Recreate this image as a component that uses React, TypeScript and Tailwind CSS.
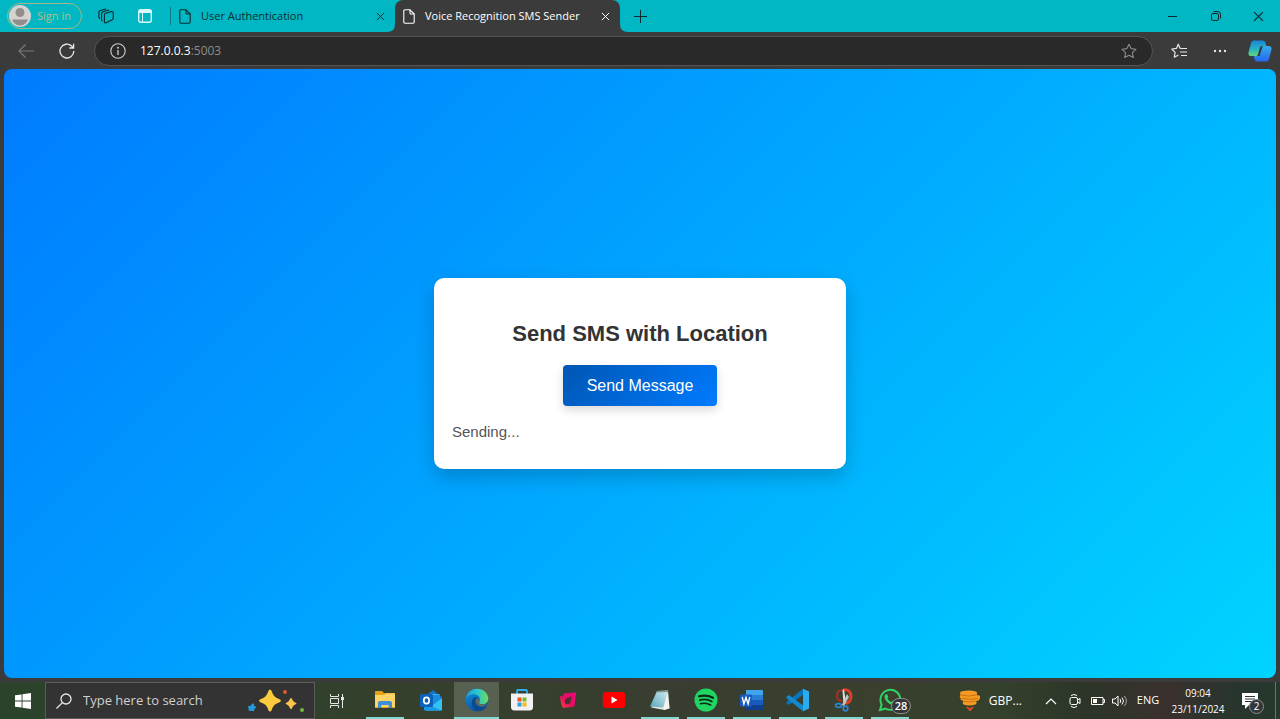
import type { ReactNode } from "react";

const UI = "font-['Open_Sans','Noto_Sans',sans-serif]";

function FileIcon() {
  return (
    <svg viewBox="0 0 12 15" className="h-[15px] w-3 shrink-0" fill="none" stroke="currentColor" strokeWidth="1.1" strokeLinejoin="round">
      <path d="M2 .8h5L11.2 5v8q0 1.2-1.2 1.200H2Q.8 14.200.8 13V2Q.8.8 2 .8Z" />
      <path d="M7 .8V4q0 1 1 1h3.200" />
    </svg>
  );
}

function CloseIcon({ className }: { className: string }) {
  return (
    <svg viewBox="0 0 10 10" className={className} fill="none" stroke="currentColor" strokeWidth="1.1">
      <path d="M1 1l8 8M9 1L1 9" />
    </svg>
  );
}

function TabStrip() {
  return (
    <header className="flex h-8 items-stretch bg-[#00b7c3] text-[#10292c]">
      <div className="flex w-[170px] items-center">
        <button className="ml-[7px] flex h-[26px] w-[75px] items-center gap-[6px] rounded-full border border-[#a5b886] pl-px text-[11px] leading-4 text-[#b5bd86]">
          <svg viewBox="0 0 22 22" className="h-[22px] w-[22px] shrink-0">
            <circle cx="11" cy="11" r="11" fill="#d5d3d1" />
            <circle cx="11" cy="7.500" r="4.500" fill="#918d8b" />
            <path d="M3.500 14.500h15v1q-2.500 5-7.500 5t-7.500-5Z" fill="#918d8b" />
          </svg>
          <span className="whitespace-nowrap">Sign in</span>
        </button>
        <button aria-label="Workspaces" className="ml-4">
          <svg viewBox="0 0 16 16" className="h-4 w-4" fill="none" stroke="currentColor" strokeWidth="1.100" strokeLinejoin="round" strokeLinecap="round">
            <path d="M7.200 5.600l6.300-2q1.500-.3 1.700 1v5.600q0 1-1 1.500l-6 3q-1.700.8-1.800-1V7q0-1.100.8-1.400Z" />
            <path d="M4.200 12.800l-.6-.8V5.600q0-1.100 1-1.500l6.200-2" />
            <path d="M1.800 10.800L.9 9.500V4.300q0-1 1-1.500L7.800 1" />
          </svg>
        </button>
        <button aria-label="Vertical tabs" className="ml-6">
          <svg viewBox="0 0 14 14" className="h-[14px] w-[14px]">
            <rect x=".7" y=".7" width="12.600" height="12.600" rx="2" fill="none" stroke="#dafaff" strokeWidth="1.400" />
            <path d="M1 1h12v3H1z" fill="#dafaff" />
            <path d="M4.500 4v9" stroke="#dafaff" />
          </svg>
        </button>
      </div>
      <div className="my-[7px] w-px bg-[#087f88]" />
      <div className="flex w-56 items-center rounded-br-lg pr-[10px] pl-2 text-[11px] text-[#0b2e31]">
        <FileIcon />
        <a href="#auth" className="ml-[10px] grow whitespace-nowrap">User Authentication</a>
        <button aria-label="Close User Authentication"><CloseIcon className="h-[9px] w-[9px]" /></button>
      </div>
      <div className="relative flex w-[225px] items-center rounded-t-lg bg-[#3b3b3b] pr-[10px] pl-2 text-[11px] text-white">
        <svg viewBox="0 0 8 8" className="absolute bottom-0 -left-2 h-2 w-2"><path d="M8 0v8H0Q8 8 8 0Z" fill="#3b3b3b" /></svg>
        <svg viewBox="0 0 8 8" className="absolute -right-2 bottom-0 h-2 w-2"><path d="M0 0v8h8Q0 8 0 0Z" fill="#3b3b3b" /></svg>
        <FileIcon />
        <a href="#sender" className="ml-[10px] grow whitespace-nowrap">Voice Recognition SMS Sender</a>
        <button aria-label="Close Voice Recognition SMS Sender"><CloseIcon className="h-[9px] w-[9px]" /></button>
      </div>
      <button aria-label="New tab" className="ml-[13px]">
        <svg viewBox="0 0 14 14" className="h-[14px] w-[14px]" stroke="currentColor"><path d="M7.500 1v13M1 7.500h13" /></svg>
      </button>
      <div className="ml-auto flex">
        <button aria-label="Minimize" className="flex w-[43px] items-center justify-center">
          <svg viewBox="0 0 10 10" className="h-[10px] w-[10px]" stroke="currentColor"><path d="M0 5.500h9" /></svg>
        </button>
        <button aria-label="Restore" className="flex w-[43px] items-center justify-center">
          <svg viewBox="0 0 10 10" className="h-[10px] w-[10px]" fill="none" stroke="currentColor">
            <rect x=".5" y="2.500" width="7" height="7" rx="1.500" /><path d="M2.500.6H7q2.500 0 2.500 2.500V7.500" />
          </svg>
        </button>
        <button aria-label="Close window" className="flex w-[43px] items-center justify-center"><CloseIcon className="h-[11px] w-[11px]" /></button>
      </div>
    </header>
  );
}

const STAR = "M8 1.200l2.100 4.400 4.800.7-3.500 3.400.9 4.900L8 12.300l-4.300 2.300.9-4.900L1.100 6.300l4.800-.7Z";

function Toolbar() {
  return (
    <div className="flex h-[37px] items-center bg-[#3b3b3b] text-[#e8e8e8]">
      <button aria-label="Back" className="ml-[18px] text-[#7a7a7a]">
        <svg viewBox="0 0 16 16" className="h-4 w-4" fill="none" stroke="currentColor" strokeWidth="1.200"><path d="M16 8H1M7.500 1.500L1 8l6.500 6.500" /></svg>
      </button>
      <button aria-label="Refresh" className="ml-[25px]">
        <svg viewBox="0 0 16 16" className="h-4 w-4" fill="none" stroke="currentColor" strokeWidth="1.300"><path d="M14.800 8A6.900 6.900 0 1 1 12.600 3L14.500 5M14.600.8V5h-4.300" /></svg>
      </button>
      <div className="ml-[19px] flex h-[30px] grow items-center rounded-full border border-[#555452] bg-[#292929] px-[15px]">
        <svg viewBox="0 0 16 16" className="h-4 w-4 shrink-0" fill="none" stroke="#cfcfcf" strokeWidth="1.100">
          <circle cx="8" cy="8" r="7.200" /><path d="M8 7v5" strokeWidth="1.300" /><circle cx="8" cy="4.700" r=".4" fill="#cfcfcf" />
        </svg>
        <div className="ml-[14px] grow text-xs text-[#8d8d8d]"><span className="text-white">127.0.0.3</span>:5003</div>
        <button aria-label="Add to favorites" className="text-[#8b8b8b]">
          <svg viewBox="0 0 16 16" className="h-4 w-4" fill="none" stroke="currentColor" strokeWidth="1.100" strokeLinejoin="round"><path d={STAR} /></svg>
        </button>
      </div>
      <button aria-label="Favorites" className="ml-[18px]">
        <svg viewBox="0 0 16 16" className="h-4 w-4" fill="none" stroke="currentColor" strokeWidth="1.200" strokeLinejoin="round" strokeLinecap="round">
          <path d="M10.500 5.500L9 5.200 7.300 1.200 5.400 5.400.8 6l3.300 3.300-.8 4.900L7 12.200M10 5.500h5.500M9.500 9h6M10.500 12.500h5" />
        </svg>
      </button>
      <button aria-label="Settings and more" className="ml-[26px]">
        <svg viewBox="0 0 14 4" className="h-1 w-[14px]" fill="currentColor"><circle cx="2" cy="2" r="1.200" /><circle cx="7" cy="2" r="1.200" /><circle cx="12" cy="2" r="1.200" /></svg>
      </button>
      <button aria-label="Copilot" className="mr-2 ml-[21px]">
        <svg viewBox="0 0 24 22" className="h-[22px] w-6">
          <defs>
            <linearGradient id="cpa" x1="0" y1="0" x2="0" y2="1"><stop stopColor="#1b85d8" /><stop offset=".55" stopColor="#25b3c4" /><stop offset="1" stopColor="#66d47b" /></linearGradient>
            <linearGradient id="cpb" x1="0" y1="0" x2="0" y2="1"><stop stopColor="#35aee9" /><stop offset="1" stopColor="#2467ef" /></linearGradient>
          </defs>
          <path d="M5.500.5h9q2.500 0 3.200 3l.7 2.700h-3.500q-1.900 0-2.600 2L10 16H3.500Q-.3 16 .6 12L3 3Q3.600.5 5.500.5Z" fill="url(#cpa)" />
          <path d="M18.500 21.500h-9q-2.500 0-3.200-3L5.800 16H9q2 0 2.800-2L14.200 6h6.300q3.800 0 2.900 4L21 19q-.6 2.500-2.500 2.500Z" fill="url(#cpb)" />
          <path d="M12 7.500L9.800 15q-.5 1-1.500 1h3.300l2.600-8.500q.4-1.300 1.600-1.300h-2.300q-1.100 0-1.500 1.300Z" fill="#303a45" />
        </svg>
      </button>
    </div>
  );
}

function Page() {
  return (
    <main className="mx-1 flex grow items-center justify-center rounded-lg bg-[linear-gradient(135deg,#007bff,#00d4ff)] font-['Liberation_Sans',Arial,sans-serif]">
      <section className="flex w-[412px] flex-col items-center rounded-[10px] bg-white px-[18px] pt-10 pb-[25px] shadow-[0_8px_20px_rgba(0,0,0,0.2)]">
        <h1 className="text-[22px] leading-8 font-bold text-[#333]">Send SMS with Location</h1>
        <button className="mt-[15px] rounded bg-[linear-gradient(135deg,#0056b3,#007bff)] px-6 py-[9px] text-base leading-[23px] text-white shadow-[0_4px_10px_rgba(0,0,0,0.15)]">Send Message</button>
        <p className="mt-[14px] self-start text-[15px] leading-6 text-[#555]">Sending...</p>
      </section>
    </main>
  );
}

function Explorer() {
  return (
    <svg viewBox="0 0 22 20" className="h-5 w-[22px]">
      <path d="M1 2q0-1 1-1h6l2 2h10q1 0 1 1v14H1Z" fill="#e6a21b" />
      <path d="M1 5h9l2-1.500h9V17H1Z" fill="#fbd468" />
      <path d="M4 18v-5q0-2 2-2h10q2 0 2 2v5h-3.500v-3h-7v3Z" fill="#3f8fd6" />
      <path d="M7.500 15h7v2h-7z" fill="#fbd468" />
    </svg>
  );
}

function Outlook() {
  return (
    <svg viewBox="0 0 24 22" className="h-[22px] w-6">
      <path d="M5 8L14 1l9 7v12q0 1.500-1.500 1.500H6.500Q5 21.500 5 20Z" fill="#1473c5" />
      <path d="M8 5h13v11H8z" fill="#45b8ee" />
      <path d="M10 7l11-2v7l-7 4Z" fill="#1b8bdc" />
      <path d="M23 9v11q0 1.500-1.500 1.500H7L23 9Z" fill="#30c4f2" />
      <path d="M5 13l17 8.500H6.500Q5 21.500 5 20Z" fill="#1a98e2" />
      <rect x="1" y="5" width="13" height="13" rx="1.500" fill="#0b62bd" />
      <ellipse cx="7.500" cy="11.500" rx="2.700" ry="3.200" fill="none" stroke="#fff" strokeWidth="1.700" />
    </svg>
  );
}

function Edge() {
  return (
    <svg viewBox="0 0 24 24" className="h-6 w-6">
      <defs>
        <linearGradient id="eda" x1="0" y1=".3" x2="1" y2=".3"><stop stopColor="#1c9fe1" /><stop offset=".55" stopColor="#2fc7c5" /><stop offset="1" stopColor="#70dc55" /></linearGradient>
        <linearGradient id="edb" x1="0" y1="0" x2=".4" y2="1"><stop stopColor="#1397dd" /><stop offset="1" stopColor="#0754a5" /></linearGradient>
      </defs>
      <circle cx="12" cy="12" r="11.300" fill="url(#edb)" />
      <path d="M.9 10.500C2 4.500 6.500.7 12 .7c6.500 0 11.300 4.600 11.300 10 0 3.500-2.700 5.600-5.800 5.600-2.600 0-4-1-3.400-2 2.400-3.900-.5-8-5.200-8C5 6.300 2.200 8.200.9 10.500Z" fill="url(#eda)" />
      <path d="M9 9.500c-4 3.500-2.500 11.600 3.500 13.700 4 .2 7.400-1.600 9.500-5.200-3.800 2-7.900 1.300-10.100-.8C9.600 15 9.500 11.500 12.500 10.300 11.500 9 10 8.800 9 9.500Z" fill="#0b4a91" />
      <path d="M12.100 10.300q-2.900 2.600 0 6.300 1.800 2.200 6.500 2.200l3.200-3.200q-3.800 1.400-7 .2-1.200-.8-.5-1.800.9-2-2.200-3.700Z" fill="#5f6a58" />
    </svg>
  );
}

function Store() {
  return (
    <svg viewBox="0 0 24 24" className="h-6 w-6">
      <path d="M7 6V3q0-1 1-1h8q1 0 1 1v3" fill="none" stroke="#2eafe8" strokeWidth="1.800" />
      <path d="M1 5.500h22V19q0 3.500-3.500 3.500h-15Q1 22.500 1 19Z" fill="#f1f1f1" />
      <path d="M7.500 9.500h4v4h-4z" fill="#f05123" /><path d="M12.500 9.500h4v4h-4z" fill="#7eb82e" />
      <path d="M7.500 14.500h4v4h-4z" fill="#2aa1df" /><path d="M12.500 14.500h4v4h-4z" fill="#f8b914" />
    </svg>
  );
}

function Pink() {
  return (
    <svg viewBox="0 0 18 18" className="h-[18px] w-[18px]">
      <defs><linearGradient id="pk" x1="1" y1="0" x2="0" y2="1"><stop stopColor="#ef0880" /><stop offset=".55" stopColor="#e50d61" /><stop offset="1" stopColor="#f04b34" /></linearGradient></defs>
      <path d="M1 5l2.500.5L5 2.500l12-1-1.500 14L4 17Q1.500 13 1 5Z" fill="url(#pk)" />
      <path d="M12.800 4.500l-1 5.500q-.8 3.500-4 3.300Q5.300 12.500 6 9.500T9.500 6.800q1.500-.2 3.300-2.300Z" fill="#4b2f31" />
    </svg>
  );
}

function YouTube() {
  return <svg viewBox="0 0 24 18" className="h-[18px] w-6"><rect x=".8" y="1" width="22.400" height="16" rx="3" fill="#fe0000" /><path d="M9.500 5.500v7L15.500 9Z" fill="#fff" /></svg>;
}

function Notepad() {
  return (
    <svg viewBox="0 0 22 22" className="h-[22px] w-[22px]">
      <defs><linearGradient id="np" x1="1" y1="0" x2="0" y2="1"><stop stopColor="#d1edf2" /><stop offset="1" stopColor="#5aa6bb" /></linearGradient></defs>
      <path d="M18 3l2.500 16.500-5 1.500L2 18.500Z" fill="#e5e4df" />
      <path d="M8 2l11-.5-4.500 17L1 17.500Z" fill="url(#np)" />
      <path d="M19 1.500L20.500 19l-5.500 2-.5-2.500Z" fill="#f2f2ee" />
      <path d="M8 2l11-.5-.3 1.500L7.400 3.500Z" fill="#87918f" />
    </svg>
  );
}

function Spotify() {
  return (
    <svg viewBox="0 0 24 24" className="h-6 w-6" fill="none" stroke="#102a19" strokeLinecap="round">
      <circle cx="12" cy="12" r="11.500" fill="#1fd662" stroke="none" />
      <path d="M5 8.300q7.500-2.100 14 1.500" strokeWidth="2.200" /><path d="M5.800 12.100q6.500-1.800 12 1.400" strokeWidth="1.800" /><path d="M6.500 15.700q5.500-1.500 10.200 1.300" strokeWidth="1.500" />
    </svg>
  );
}

function Word() {
  return (
    <svg viewBox="0 0 24 22" className="h-[22px] w-6">
      <path d="M6 1h16q1 0 1 1v5H6Z" fill="#41a5ee" /><path d="M6 6h17v5H6z" fill="#2b7cd3" />
      <path d="M6 11h17v5H6z" fill="#185abd" /><path d="M6 16h17v4q0 1-1 1H7q-1 0-1-1Z" fill="#103f91" />
      <rect x="0" y="5.500" width="12" height="12" rx="1" fill="#185abd" />
      <path d="M2.200 8l1.700 7L6 8.500 8.100 15l1.700-7" fill="none" stroke="#fff" strokeWidth="1.400" />
    </svg>
  );
}

function VSCode() {
  return (
    <svg viewBox="0 0 24 24" className="h-6 w-6">
      <path d="M17 .8v6L2.800 17 .5 15.300v-1.200Z" fill="#0875bd" />
      <path d="M17 23.200v-6L2.800 7 .5 8.700v1.200Z" fill="#128ad1" />
      <path d="M17 .8l6 2.700v17l-6 2.700Z" fill="#2bacf0" />
    </svg>
  );
}

function Snip() {
  return (
    <svg viewBox="0 0 20 24" className="h-6 w-5">
      <path d="M9.500 2C14 1 17 4 17 8.500S15 14.500 12 15.500" fill="none" stroke="#db4025" strokeWidth="3" />
      <path d="M10 2.500C4.500 1.500 3 4.500 3 8s2.500 5 5.500 5" fill="none" stroke="#a92f23" strokeWidth="2" />
      <path d="M8.500 2l1.500-1 2 14-2.500 2Z" fill="#dedfdd" /><path d="M13 6l2 3-5 9-2-1Z" fill="#bfc6c8" />
      <g fill="none" stroke="#2d85d2" strokeWidth="1.700"><ellipse cx="4.500" cy="17.500" rx="3" ry="1.800" /><circle cx="11.500" cy="20.500" r="2.300" /></g>
    </svg>
  );
}

function WhatsApp() {
  return (
    <span className="relative">
      <svg viewBox="0 0 24 24" className="h-6 w-6">
        <path d="M2 22l1.600-5.500A10 10 0 1 1 7.500 20.500Z" fill="none" stroke="#2fd366" strokeWidth="2" />
        <path d="M8 6.300q1.300-.4 1.700 1l.7 1.700-1 1.400q1.500 2.700 4 3.700l1.200-1.400 2.500 1.300q.5 2.600-2.600 2.800Q9.700 16.200 7 11 5.700 7.500 8 6.300Z" fill="#2fd366" />
      </svg>
      <span className="absolute top-[10px] left-[13px] flex h-4 w-5 items-center justify-center rounded-full border border-[#8b8d88] bg-[#33363a] text-[11px] leading-none font-semibold text-white">28</span>
    </span>
  );
}

const apps: { name: string; icon: ReactNode; state: "idle" | "open" | "active" }[] = [
  { name: "File Explorer", icon: <Explorer />, state: "open" },
  { name: "Outlook", icon: <Outlook />, state: "idle" },
  { name: "Edge", icon: <Edge />, state: "active" },
  { name: "Store", icon: <Store />, state: "idle" },
  { name: "Media", icon: <Pink />, state: "idle" },
  { name: "YouTube", icon: <YouTube />, state: "idle" },
  { name: "Notepad", icon: <Notepad />, state: "open" },
  { name: "Spotify", icon: <Spotify />, state: "open" },
  { name: "Word", icon: <Word />, state: "open" },
  { name: "VS Code", icon: <VSCode />, state: "open" },
  { name: "Snipping Tool", icon: <Snip />, state: "open" },
  { name: "WhatsApp", icon: <WhatsApp />, state: "open" },
];

const appStyle = {
  idle: "border-transparent w-[38px] mx-1",
  open: "border-[#83d8d1] w-[38px] mx-1",
  active: "border-[#83d8d1] bg-[#586052] w-[45px]",
};

function Taskbar() {
  return (
    <footer className="flex h-[37px] items-stretch bg-[linear-gradient(90deg,#2b432b_0%,#2c432b_20%,#35402c_30%,#383e30_50%,#3a402e_68%,#34412c_78%,#2c3528_85%,#3a302e_91%,#29352d_96%,#26382d_100%)] text-white">
      <button aria-label="Start" className="flex w-[45px] items-center justify-center">
        <svg viewBox="0 0 16 16" className="h-4 w-4" fill="#fff"><path d="M0 2.300l6.600-.9v6.100H0ZM7.500 1.300L16 .1v7.400H7.500ZM0 8.400h6.600v6.200L0 13.700ZM7.500 8.400H16v7.500l-8.500-1.200Z" /></svg>
      </button>
      <label className="flex w-[270px] items-center border border-[#5c5c5c] bg-[#333] pr-[9px] pl-[10px]">
        <svg viewBox="0 0 16 16" className="h-4 w-4 shrink-0" fill="none" stroke="#e8e8e8" strokeWidth="1.300"><circle cx="10" cy="6" r="5" /><path d="M6.400 9.600L.5 15.500" /></svg>
        <input aria-label="Type here to search" placeholder="Type here to search" className="ml-[11px] w-40 min-w-0 grow bg-transparent text-[13px] outline-none placeholder:text-[#cfcfcf]" />
        <svg viewBox="0 0 58 24" className="h-6 w-[58px] shrink-0">
          <path d="M23 .5q1.500 0 2 2.500 1.500 5 6.500 6.700 2.500.8 2.500 2t-2.500 2Q26.500 15.300 25 20q-.5 2.500-2 2.500T21 20q-1.500-4.700-6.500-6.300-2.500-.8-2.500-2t2.500-2Q19.500 8 21 3q.5-2.500 2-2.500Z" fill="#fccb3e" />
          <path d="M44 9q.9 0 1.300 1.500.7 2.200 2.800 3 1.400.5 1.400 1t-1.400 1q-2.100.8-2.800 3Q44.900 20 44 20t-1.300-1.500q-.7-2.200-2.800-3-1.400-.5-1.400-1t1.400-1q2.100-.8 2.800-3Q43.100 9 44 9Z" fill="#fcc54a" />
          <path d="M6 14.500q1-.2 1 1.200 0 1 1.200 1.500 1.500.8.300 1.900-1.200.6-1.200 1.800 0 1.900-1.500 1.300-1-.8-2.300-.3-2 .7-1.900-1 .5-1.200-.3-2.200-1-1.600.7-1.700 1.500.2 2.200-1.100.8-1.400 1.800-1.400Z" fill="#2499dc" />
          <circle cx="38" cy="3" r="1.900" fill="#e55d2b" /><circle cx="55" cy="21" r="2" fill="#76b843" />
        </svg>
      </label>
      <button aria-label="Task view" className="flex w-[47px] items-center justify-center pr-[3px]">
        <svg viewBox="0 0 16 16" className="h-4 w-4" fill="none" stroke="#e8e8e8"><path d="M1.500 1v2.500h8V1M1.500 15v-2.500h8V15M1.500 5.500h8v5h-8ZM13.500 1v3M13.500 7v8" /><path d="M12 4h3v3h-3z" fill="#e8e8e8" stroke="none" /></svg>
      </button>
      <nav aria-label="Applications" className="flex">
        {apps.map((a) => (
          <button key={a.name} aria-label={a.name} className={`flex shrink-0 items-center justify-center border-b-2 ${appStyle[a.state]}`}>{a.icon}</button>
        ))}
      </nav>
      <div className="ml-auto flex items-center text-xs">
        <button className="flex items-center gap-2">
          <svg viewBox="0 0 22 22" className="h-[22px] w-[22px]">
            <path d="M2 1.500q8-2 15 0 2 1.500.5 3.500l3 .5q1.500 3-1 5L17 11q1.500 2-.5 3.500-6 2-12 0-1.500-1.500 0-3.500-3.500-.5-3-3Q0 6.500 1.500 5 .5 2.500 2 1.500Z" fill="#f69a22" />
            <path d="M2 5q8 2 15.500 0M2 8.200q8 2 17 .3M4.500 11.200q6 1.500 12-.2" fill="none" stroke="#cc7310" />
            <path d="M7.500 17l3.500 1.500 3.500-1.500-3.500 4Z" fill="#dc4a22" stroke="#dc4a22" />
          </svg>
          <span>GBP...</span>
        </button>
        <button aria-label="Show hidden icons" className="ml-[23px]"><svg viewBox="0 0 12 12" className="h-3 w-3" fill="none" stroke="#fff" strokeWidth="1.200"><path d="M1 9l5-5 5 5" /></svg></button>
        <button aria-label="Meet now" className="ml-3"><svg viewBox="0 0 12 16" className="h-4 w-3" fill="none" stroke="#fff"><rect x="1" y="4.500" width="7.500" height="7" rx="1.500" /><path d="M8.500 7L11 5.500v5L8.500 9M2 2.500q3-2 6 0M2 13.500q3 2 6 0" /></svg></button>
        <button aria-label="Battery" className="ml-[10px]"><svg viewBox="0 0 14 10" className="h-[10px] w-[14px]" fill="none" stroke="#fff"><path d="M.5 1.500h11.500v7H.5ZM12 3.500h1.500v3H12" /><path d="M2 3h4v4H2z" fill="#fff" stroke="none" /></svg></button>
        <button aria-label="Volume" className="ml-[7px]"><svg viewBox="0 0 16 14" className="h-[14px] w-4" fill="none" stroke="#fff"><path d="M.5 5h2.500l3-3v10l-3-3H.5ZM8 5q1.500 2 0 4M10 3.500q3 3.500 0 7" /><path d="M12.300 2q4.200 5 0 10" stroke="#aaa" /></svg></button>
        <button className="ml-2 w-6 text-[11px]">ENG</button>
        <button className="ml-2 w-[60px] text-center text-[10px] leading-4"><time>09:04<br />23/11/2024</time></button>
        <button aria-label="Notifications" className="relative mr-3 ml-[13px] h-[22px] w-[22px]">
          <svg viewBox="0 0 22 22" className="h-[22px] w-[22px]"><path d="M1 3h16v12h-9l-4 4v-4H1Z" fill="#fff" /><path d="M4 6.500h10M4 9h10M4 11.500h7" stroke="#30362f" /></svg>
          <span className="absolute top-[9px] left-2 flex h-[15px] w-[15px] items-center justify-center rounded-full border border-[#8b8d88] bg-[#33363a] text-[10px] leading-none">2</span>
        </button>
        <span className="mr-1 h-[37px] w-px bg-[#6b756c]" />
      </div>
    </footer>
  );
}

export default function App() {
  return (
    <div className={`flex min-h-screen flex-col bg-[#3b3b3b] ${UI}`}>
      <TabStrip />
      <Toolbar />
      <Page />
      <div className="h-1" />
      <Taskbar />
    </div>
  );
}
